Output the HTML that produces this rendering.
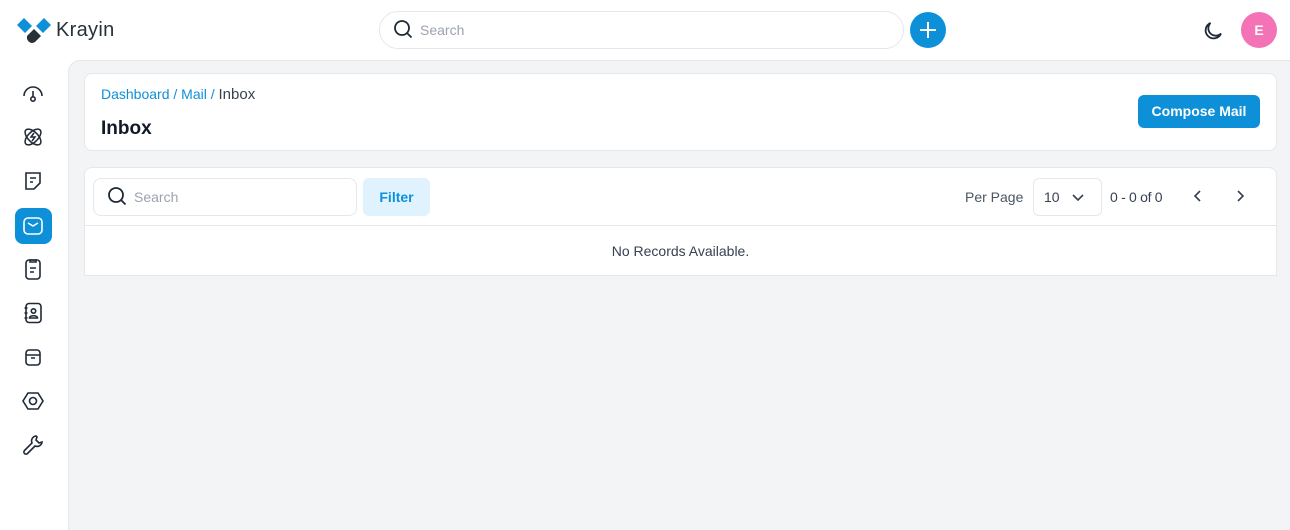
<!DOCTYPE html>
<html><head><style>
*{box-sizing:border-box;margin:0;padding:0}
html,body{width:1290px;height:530px;overflow:hidden}
body{background:#fff;font-family:"Liberation Sans",sans-serif;position:relative;color:#1f2937}
.abs{position:absolute}
svg{display:block}
.ic{position:absolute;left:22px;width:22px;height:22px}
</style></head><body>
<svg class="abs" style="left:17px;top:18px" width="34" height="26" viewBox="0 0 34 26">
<path d="M0 7 L7 0 L15 8 L8 15 Z" fill="#0e90d9"/><path d="M19 8 L27 0 L34 7 L26 15 Z" fill="#0e90d9"/><path d="M10 18 L17 11 L24 18 L18 24 Q13 27 10 21 Z" fill="#263238"/></svg>
<div class="abs" style="left:56px;top:19px;font-size:20px;color:#263238;letter-spacing:0.3px">Krayin</div>
<div class="abs" style="left:379px;top:11px;width:525px;height:38px;border:1px solid #e5e7eb;border-radius:19px"></div>
<svg class="abs" style="left:393px;top:19px" width="20" height="20" viewBox="0 0 20 20" fill="none" stroke="#1f2937" stroke-width="1.8"><circle cx="9" cy="9" r="7"/><path d="M14 14l4.5 4.5"/></svg>
<div class="abs" style="left:420px;top:22px;font-size:14px;color:#9ca3af">Search</div>
<div class="abs" style="left:910px;top:12px;width:36px;height:36px;border-radius:50%;background:#0e90d9"></div>
<svg class="abs" style="left:918px;top:20px" width="20" height="20" viewBox="0 0 20 20" stroke="#fff" stroke-width="2"><path d="M10 2v16M2 10h16"/></svg>
<svg class="abs" style="left:1201px;top:19px" width="24" height="24" viewBox="0 0 24 24" fill="none" stroke="#1f2937" stroke-width="1.8"><path d="M20 14.5A8 8 0 1 1 9.5 4a6.5 6.5 0 0 0 10.5 10.5z"/></svg>
<div class="abs" style="left:1241px;top:12px;width:36px;height:36px;border-radius:50%;background:#f472b6;color:#fff;font-size:14px;font-weight:bold;text-align:center;line-height:36px">E</div>
<svg class="ic" style="top:82px" viewBox="0 0 22 22" fill="none" stroke="#1f2937" stroke-width="1.6"><path d="M2 14A9 9 0 0 1 20 14"/><path d="M11 9v6"/><circle cx="11" cy="17" r="2.2"/></svg>
<svg class="ic" style="top:126px" viewBox="0 0 22 22" fill="none" stroke="#1f2937" stroke-width="1.5"><ellipse cx="11" cy="11" rx="10" ry="5" transform="rotate(45 11 11)"/><ellipse cx="11" cy="11" rx="10" ry="5" transform="rotate(-45 11 11)"/><path d="M12 7l-3 4h4l-3 4"/></svg>
<svg class="ic" style="top:170px" viewBox="0 0 22 22" fill="none" stroke="#1f2937" stroke-width="1.6"><path d="M4 3h14v10l-6 6H4z"/><path d="M8 8h6M8 12h3"/></svg>
<div class="abs" style="left:15px;top:208px;width:37px;height:36px;border-radius:8px;background:#0e90d9"></div>
<svg class="ic" style="top:215px" viewBox="0 0 22 22" fill="none" stroke="#fff" stroke-width="1.6"><rect x="2" y="3" width="18" height="16" rx="4"/><path d="M6 8l5 3 5-3"/></svg>
<svg class="ic" style="top:258px" viewBox="0 0 22 22" fill="none" stroke="#1f2937" stroke-width="1.6"><rect x="4" y="2" width="14" height="19" rx="3"/><path d="M8 2h6v2H8zM8 10h6M8 14h4"/></svg>
<svg class="ic" style="top:302px" viewBox="0 0 22 22" fill="none" stroke="#1f2937" stroke-width="1.6"><rect x="4" y="1.5" width="15" height="19" rx="3"/><circle cx="11.5" cy="9" r="2.2"/><path d="M7.5 16c0-3 8-3 8 0zM2.5 6h3M2.5 11h3M2.5 16h3"/></svg>
<svg class="ic" style="top:346px" viewBox="0 0 22 22" fill="none" stroke="#1f2937" stroke-width="1.6"><rect x="4" y="4" width="14" height="15" rx="3"/><path d="M4 9h14M9 12h4"/></svg>
<svg class="ic" style="top:390px" viewBox="0 0 22 22" fill="none" stroke="#1f2937" stroke-width="1.6"><path d="M6 3h10l5 8-5 8H6l-5-8z"/><circle cx="11" cy="11" r="3.5"/></svg>
<svg class="ic" style="top:434px" viewBox="0 0 22 22" fill="none" stroke="#1f2937" stroke-width="1.6"><path d="M14 2a5 5 0 0 0-4 7L2.5 16.5a2 2 0 0 0 3 3L13 12a5 5 0 0 0 7-4l-3 1-3-3 1-3z"/></svg>
<div class="abs" style="left:68px;top:60px;width:1230px;height:480px;background:#f3f4f6;border-top-left-radius:12px;border-left:1px solid #e5e7eb;border-top:1px solid #e5e7eb"></div>
<div class="abs" style="left:84px;top:73px;width:1193px;height:78px;background:#fff;border:1px solid #e5e7eb;border-radius:8px"></div>
<div class="abs" style="left:101px;top:86px;font-size:14px;color:#0e90d9">Dashboard / Mail / <span style="color:#374151;font-size:15px">Inbox</span></div>
<div class="abs" style="left:101px;top:118px;font-size:19px;font-weight:bold;color:#111827">Inbox</div>
<div class="abs" style="left:1138px;top:95px;width:122px;height:33px;background:#0e90d9;border-radius:6px;color:#fff;font-size:14px;font-weight:bold;text-align:center;line-height:33px">Compose Mail</div>
<div class="abs" style="left:84px;top:167px;width:1193px;height:109px;background:#fff;border:1px solid #e5e7eb;border-radius:8px 8px 0 0"></div>
<div class="abs" style="left:85px;top:225px;width:1191px;height:1px;background:#e5e7eb"></div>
<div class="abs" style="left:93px;top:178px;width:264px;height:38px;border:1px solid #e5e7eb;border-radius:8px"></div>
<svg class="abs" style="left:107px;top:186px" width="20" height="20" viewBox="0 0 20 20" fill="none" stroke="#1f2937" stroke-width="1.8"><circle cx="9" cy="9" r="7"/><path d="M14 14l4.5 4.5"/></svg>
<div class="abs" style="left:134px;top:189px;font-size:14px;color:#9ca3af">Search</div>
<div class="abs" style="left:363px;top:178px;width:67px;height:38px;background:#e0f2fe;border-radius:6px;color:#0e90d9;font-size:14px;font-weight:bold;text-align:center;line-height:38px">Filter</div>
<div class="abs" style="left:965px;top:189px;font-size:14px;color:#4b5563">Per Page</div>
<div class="abs" style="left:1033px;top:178px;width:69px;height:38px;border:1px solid #e5e7eb;border-radius:6px"></div>
<div class="abs" style="left:1044px;top:189px;font-size:14px;color:#374151">10</div>
<svg class="abs" style="left:1071px;top:190px" width="14" height="14" viewBox="0 0 14 14" fill="none" stroke="#374151" stroke-width="1.6"><path d="M2 5l5 5 5-5"/></svg>
<div class="abs" style="left:1110px;top:189px;font-size:14px;color:#374151;letter-spacing:-0.3px">0 - 0 of 0</div>
<svg class="abs" style="left:1191px;top:189px" width="14" height="14" viewBox="0 0 14 14" fill="none" stroke="#374151" stroke-width="1.6"><path d="M9 2L4 7l5 5"/></svg>
<svg class="abs" style="left:1233px;top:189px" width="14" height="14" viewBox="0 0 14 14" fill="none" stroke="#374151" stroke-width="1.6"><path d="M5 2l5 5-5 5"/></svg>
<div class="abs" style="left:85px;top:243px;width:1191px;text-align:center;font-size:14px;color:#374151">No Records Available.</div>
</body></html>
